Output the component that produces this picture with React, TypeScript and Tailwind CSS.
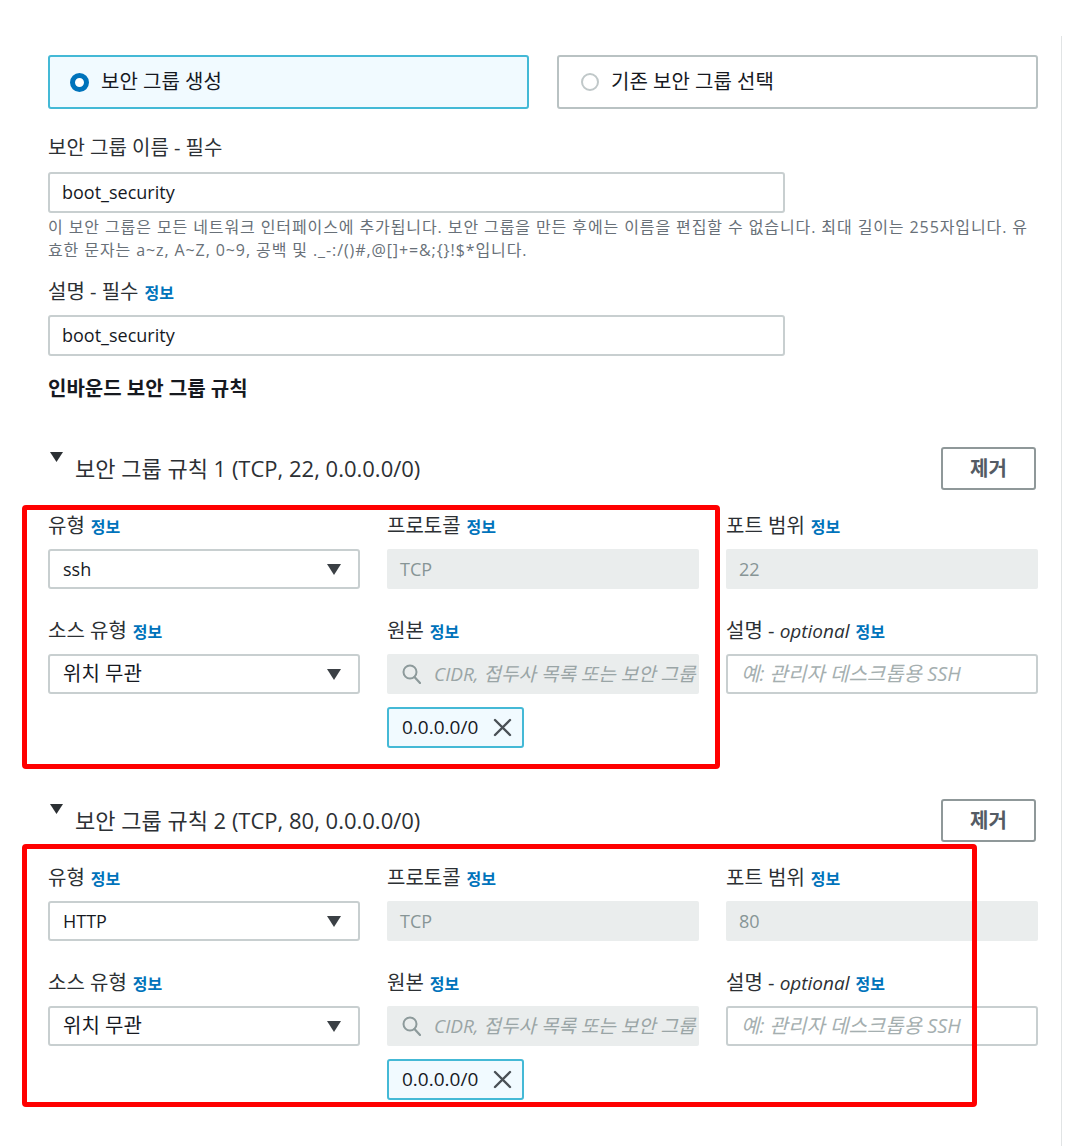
import React from "react";

const font = "font-['Open_Sans','Noto_Sans_CJK_KR',sans-serif]";

const Info = () => (
  <span className="ml-[6px] text-[16px] font-bold text-[#0073bb]">정보</span>
);

const Label = ({ children }: { children: React.ReactNode }) => (
  <div className="h-[24px] leading-[24px] text-[20px] text-[#2c3034] mb-[11px] whitespace-nowrap">
    {children}
  </div>
);

const Caret = () => (
  <svg width="14" height="11" viewBox="0 0 14 11" className="shrink-0">
    <path d="M0 0 H14 L7 11 Z" fill="#3b4045" />
  </svg>
);

const Select = ({ value, kr }: { value: string; kr?: boolean }) => (
  <div
    className={
      "h-[40px] flex items-center justify-between pl-[13px] pr-[17px] border-2 border-[#c8cfd0] rounded-[3px] bg-white text-[#16191f] " +
      (kr ? "text-[20px]" : "text-[18px]")
    }
  >
    <span>{value}</span>
    <Caret />
  </div>
);

const Disabled = ({ value }: { value: string }) => (
  <div className="h-[40px] flex items-center pl-[13px] rounded-[2px] bg-[#eaeded] text-[18px] text-[#879596]">
    {value}
  </div>
);

const SearchIcon = () => (
  <svg width="19" height="20" viewBox="0 0 19 20" className="shrink-0">
    <circle cx="8" cy="8" r="6.5" fill="none" stroke="#8d9a9b" strokeWidth="2" />
    <path d="M12.5 13 L18 19" stroke="#8d9a9b" strokeWidth="2.2" strokeLinecap="round" />
  </svg>
);

const CloseIcon = () => (
  <svg width="19" height="19" viewBox="0 0 19 19" className="shrink-0">
    <path d="M2 2 L17 17 M17 2 L2 17" stroke="#4a5056" strokeWidth="2.4" strokeLinecap="round" />
  </svg>
);

const Rule = ({
  title,
  type,
  port,
  box,
}: {
  title: string;
  type: string;
  port: string;
  box: string;
}) => (
  <div className="relative">
    <div className="h-[43px] flex items-center justify-between">
      <div className="flex items-start pl-[2px]">
        <svg width="13" height="10" viewBox="0 0 13 10" className="mt-[-3px]">
          <path d="M0 0 H13 L6.5 10 Z" fill="#2c3034" />
        </svg>
        <span className="ml-[12px] mt-[-2px] text-[22px] leading-[30px] text-[#2c3034]">{title}</span>
      </div>
      <button className="w-[95px] h-[43px] mr-[2px] border-2 border-[#8f9899] rounded-[3px] bg-white text-[20px] font-bold text-[#545b64]">
        제거
      </button>
    </div>

    <div className="grid grid-cols-[312px_312px_312px] gap-x-[27px] gap-y-[30px] mt-[24px]">
      <div>
        <Label>
          유형<Info />
        </Label>
        <Select value={type} />
      </div>
      <div>
        <Label>
          프로토콜<Info />
        </Label>
        <Disabled value="TCP" />
      </div>
      <div>
        <Label>
          포트 범위<Info />
        </Label>
        <Disabled value={port} />
      </div>

      <div>
        <Label>
          소스 유형<Info />
        </Label>
        <Select value="위치 무관" kr />
      </div>
      <div>
        <Label>
          원본<Info />
        </Label>
        <div className="h-[40px] flex items-center pl-[15px] gap-[13px] rounded-[2px] bg-[#eaeded] overflow-hidden whitespace-nowrap">
          <SearchIcon />
          <span className="italic text-[19px] text-[#9aa5a6]">CIDR, 접두사 목록 또는 보안 그룹</span>
        </div>
        <div className="mt-[13px] w-[137px] h-[41px] flex items-center justify-between pl-[13px] pr-[10px] border-2 border-[#44b9d6] rounded-[3px] bg-[#f1faff] text-[19px] text-[#16191f]">
          <span>0.0.0.0/0</span>
          <CloseIcon />
        </div>
      </div>
      <div>
        <Label>
          설명 - <span className="italic text-[19px]">optional</span>
          <Info />
        </Label>
        <div className="h-[40px] flex items-center pl-[13px] border-2 border-[#c8cfd0] rounded-[3px] bg-white italic text-[20px] text-[#a5afb0] whitespace-nowrap overflow-hidden">
          예: 관리자 데스크톱용 SSH
        </div>
      </div>
    </div>

    <div
      className={
        "absolute border-[5px] border-[#ff0000] rounded-[4px] pointer-events-none " + box
      }
    />
  </div>
);

export default function App() {
  return (
    <div className={`w-[1070px] h-[1146px] bg-white overflow-hidden ${font}`}>
      <div className="ml-[48px] mt-[36px] w-[1014px] h-[1110px] border-r border-[#e1e4e5] pt-[19px] pr-[23px]">
        <div className="flex gap-[28px]">
          <div className="w-[482px] h-[54px] flex items-center pl-[20px] border-2 border-[#44b9d6] rounded-[3px] bg-[#f1faff]">
            <span className="w-[19px] h-[19px] rounded-full border-[5px] border-[#0073bb] bg-white" />
            <span className="ml-[12px] text-[20px] text-[#16191f]">보안 그룹 생성</span>
          </div>
          <div className="w-[482px] h-[54px] flex items-center pl-[22px] border-2 border-[#b9c2c3] rounded-[3px] bg-white">
            <span className="w-[18px] h-[18px] rounded-full border-2 border-[#c0c8c9] bg-white" />
            <span className="ml-[12px] text-[20px] text-[#16191f]">기존 보안 그룹 선택</span>
          </div>
        </div>

        <div className="mt-[27px] h-[24px] leading-[24px] text-[20px] text-[#2c3034]">
          보안 그룹 이름 - 필수
        </div>
        <div className="mt-[12px] w-[737px] h-[41px] flex items-center pl-[12px] border-2 border-[#c8cfd0] rounded-[3px] text-[18px] text-[#16191f]">
          boot_security
        </div>
        <div className="mt-[3px] text-[16px] leading-[23px] text-[#687078] tracking-[0.9px] whitespace-nowrap">
          이 보안 그룹은 모든 네트워크 인터페이스에 추가됩니다. 보안 그룹을 만든 후에는 이름을 편집할 수 없습니다. 최대 길이는 255자입니다. 유
          <br />
          효한 문자는 a~z, A~Z, 0~9, 공백 및 ._-:/()#,@[]+=&amp;;{"{}"}!$*입니다.
        </div>

        <div className="mt-[18px] h-[24px] leading-[24px] text-[20px] text-[#2c3034]">
          설명 - 필수<Info />
        </div>
        <div className="mt-[11px] w-[737px] h-[41px] flex items-center pl-[12px] border-2 border-[#c8cfd0] rounded-[3px] text-[18px] text-[#16191f]">
          boot_security
        </div>

        <div className="mt-[21px] h-[24px] leading-[24px] text-[20px] font-bold text-[#16191f]">
          인바운드 보안 그룹 규칙
        </div>

        <div className="mt-[46px]">
          <Rule
            title="보안 그룹 규칙 1 (TCP, 22, 0.0.0.0/0)"
            type="ssh"
            port="22"
            box="top-[58px] left-[-26px] w-[698px] h-[264px]"
          />
        </div>
        <div className="mt-[51px]">
          <Rule
            title="보안 그룹 규칙 2 (TCP, 80, 0.0.0.0/0)"
            type="HTTP"
            port="80"
            box="top-[45px] left-[-26px] w-[955px] h-[263px]"
          />
        </div>
      </div>
    </div>
  );
}
